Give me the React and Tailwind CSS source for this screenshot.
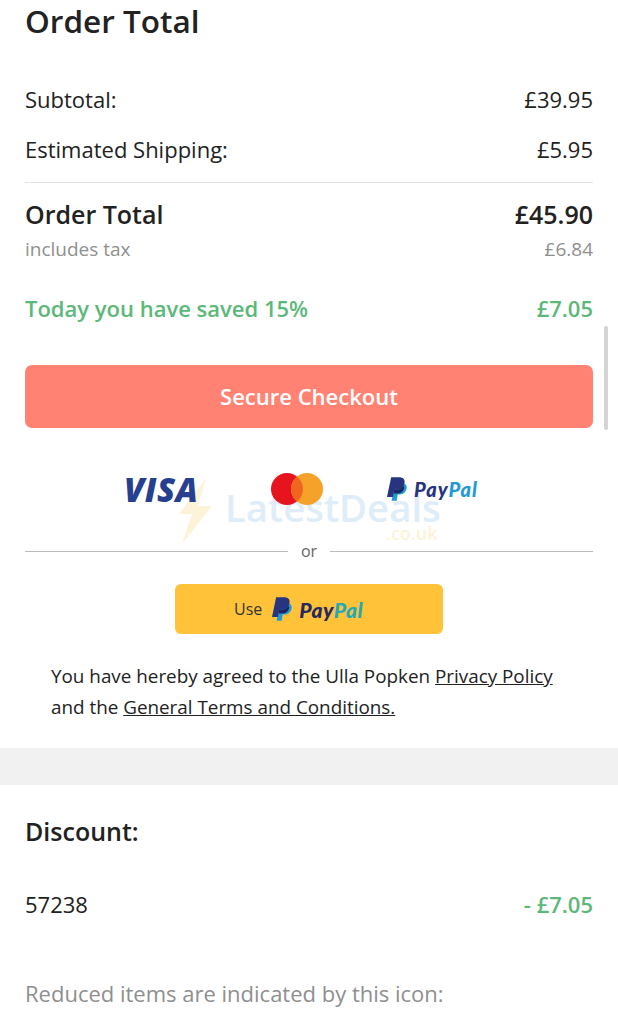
function PayPalMark({ className }) {
  return (
    <svg viewBox="0 0 24 28" className={className}>
      <path d="M10 7h8c4 0 6.300 2.500 5.600 6.200-.8 4.500-4 7.300-8.300 7.300h-2.500L11.600 28H5.500z" fill="#1f9ad6" />
      <path d="M5 0h9.500c4.700 0 7.300 2.600 6.500 6.700-.9 5-4.600 8-9.600 8H8.600L7.100 23.500H0z" fill="#27347f" />
      <path d="M8.600 14.700h2.800c3.700 0 6.600-1.600 8.300-4.400 1.300.9 1.100 2.200.7 3.400-1.200 3.700-3.900 5.700-7.700 5.700H7.800z" fill="#1e2460" />
    </svg>
  );
}

function MasterCard() {
  return (
    <svg viewBox="0 0 52 32" className="h-[32px] w-[52px]">
      <circle cx="16" cy="16" r="16" fill="#e6141f" />
      <circle cx="36" cy="16" r="16" fill="#f6a12a" />
      <path d="M26 3.500a16 16 0 0 1 0 25 16 16 0 0 1 0-25z" fill="#f0661f" />
    </svg>
  );
}

function Row({ label, value, className = "" }) {
  return (
    <div className={`flex items-center justify-between ${className}`}>
      <span>{label}</span>
      <span>{value}</span>
    </div>
  );
}

export default function App() {
  return (
    <div className="relative h-[1024px] w-[618px] overflow-hidden bg-white font-['Open_Sans',sans-serif] text-[#222]">
      {/* faded site watermark */}
      <div className="pointer-events-none absolute left-[176px] top-[476px] h-[70px] w-[270px]">
        <svg viewBox="0 0 36 66" className="absolute left-0 top-[2px] h-[66px] w-[36px]">
          <path d="M30 0 3 36h13L6 66l30-38H22z" fill="#fdf3d9" />
        </svg>
        <span className="absolute left-[49px] top-[6px] text-[38.3px] font-semibold leading-[50px] text-[#deedf8]">LatestDeals</span>
        <span className="absolute left-[210px] top-[47px] text-[18px] font-semibold leading-[20px] text-[#fdf3d9]">.co.uk</span>
      </div>

      <div className="absolute right-[10px] top-[326px] h-[104px] w-[4px] rounded-full bg-[#d4d4d4]" />

      <section className="relative px-[25px]">
        <h1 className="text-[31.5px] font-semibold leading-[42px]">Order Total</h1>

        <Row label="Subtotal:" value="£39.95" className="mt-[42px] h-[30px] text-[22px]" />
        <Row label="Estimated Shipping:" value="£5.95" className="mt-[20px] h-[30px] text-[22px]" />

        <div className="mt-[18px] h-px bg-[#e3e3e3]" />

        <Row label="Order Total" value="£45.90" className="mt-[16px] h-[32px] text-[25px] font-semibold" />
        <Row label="includes tax" value="£6.84" className="mt-[6px] h-[24px] text-[19px] text-[#8f8f8f]" />
        <Row label="Today you have saved 15%" value="£7.05" className="mt-[32px] h-[30px] text-[22px] font-semibold text-[#5cb878]" />

        <button className="mt-[42px] flex h-[63px] w-full items-center justify-center rounded-[7px] bg-[#ff8273] text-[22px] font-semibold text-white">
          Secure Checkout
        </button>

        <div className="mt-[43px] flex h-[36px] items-center">
          <span className="ml-[99px] w-[74px] text-[33px] font-extrabold italic leading-none tracking-[0.5px] text-[#26408f]">VISA</span>
          <div className="ml-[73px]">
            <MasterCard />
          </div>
          <div className="ml-[64px] flex items-center gap-[7px]">
            <PayPalMark className="h-[24px] w-[20px]" />
            <span className="font-['Lato',sans-serif] text-[20px] font-black italic leading-none tracking-[1px] text-[#27347f]">
              Pay<span className="text-[#1f9ad6]">Pal</span>
            </span>
          </div>
        </div>

        <div className="mt-[30px] flex h-[28px] items-center text-[16px] text-[#666]">
          <div className="h-px flex-1 bg-[#bbb]" />
          <span className="px-[13px]">or</span>
          <div className="h-px flex-1 bg-[#bbb]" />
        </div>

        <div className="mt-[19px] flex justify-center">
          <button className="flex h-[50px] w-[268px] items-center rounded-[6px] bg-[#ffc239] pl-[59px]">
            <span className="text-[16px] text-[#333]">Use</span>
            <PayPalMark className="ml-[10px] h-[24px] w-[20px]" />
            <span className="ml-[7px] font-['Lato',sans-serif] text-[21px] font-black italic leading-none tracking-[0.5px] text-[#26285f]">
              Pay<span className="text-[#25a9b8]">Pal</span>
            </span>
          </button>
        </div>

        <p className="mt-[27px] px-[26px] text-[18.85px] leading-[31px]">
          You have hereby agreed to the Ulla Popken <span className="underline">Privacy Policy</span> and the <span className="underline">General Terms and Conditions.</span>
        </p>
      </section>

      <div className="mt-[25px] h-[37px] bg-[#f1f1f1]" />

      <section className="px-[25px]">
        <h2 className="mt-[30px] text-[25px] font-semibold leading-[32px]">Discount:</h2>
        <div className="mt-[42px] flex h-[30px] items-center justify-between text-[22px]">
          <span>57238</span>
          <span className="font-semibold text-[#5cb878]">- £7.05</span>
        </div>
        <p className="mt-[59px] text-[22px] leading-[30px] text-[#8f8f8f]">Reduced items are indicated by this icon:</p>
      </section>
    </div>
  );
}
